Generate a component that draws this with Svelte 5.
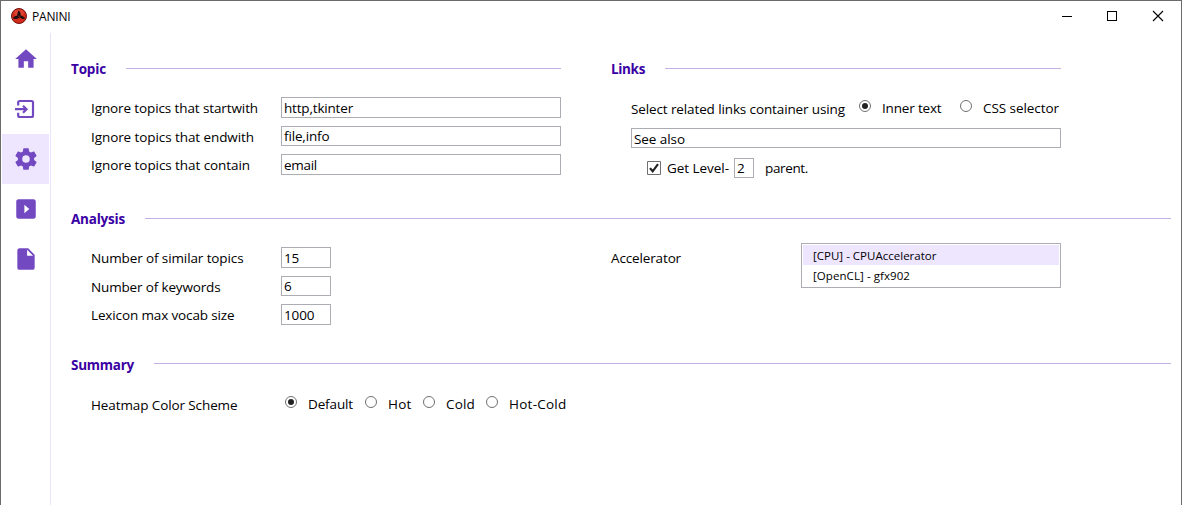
<script>
  function fit(node, width) {
    const natural = node.getBoundingClientRect().width;
    const n = node.textContent.length;
    node.style.letterSpacing = (width - natural) / n + 'px';
  }

  const nav = [
    { id: 'home', d: 'M10 20v-6h4v6h5v-8h3L12 3 2 12h3v8z' },
    { id: 'import' },
    { id: 'settings', d: 'M12 15.500A3.500 3.500 0 0 1 8.500 12 3.500 3.500 0 0 1 12 8.500a3.500 3.500 0 0 1 3.500 3.500 3.500 3.500 0 0 1-3.500 3.500m7.430-2.530c.04-.32.07-.64.07-.97 0-.33-.03-.66-.07-1l2.110-1.630c.19-.15.24-.42.12-.64l-2-3.460c-.12-.22-.39-.31-.61-.22l-2.490 1c-.52-.39-1.060-.73-1.690-.98l-.37-2.650A.506.506 0 0 0 14 2h-4c-.25 0-.46.18-.5.42l-.37 2.650c-.63.25-1.170.59-1.690.98l-2.490-1c-.22-.09-.49 0-.61.22l-2 3.460c-.13.22-.07.49.12.64L4.570 11c-.04.34-.07.67-.07 1 0 .33.03.65.07.97l-2.110 1.660c-.19.15-.25.42-.12.64l2 3.460c.12.22.39.3.61.22l2.490-1.010c.52.4 1.060.74 1.690.99l.37 2.650c.04.24.25.42.5.42h4c.25 0 .46-.18.5-.42l.37-2.650c.63-.26 1.170-.59 1.690-.99l2.490 1.010c.22.08.49 0 .61-.22l2-3.460c.12-.22.07-.49-.12-.64z' },
    { id: 'run', d: 'M19 3H5c-1.100 0-2 .9-2 2v14c0 1.100.9 2 2 2h14c1.100 0 2-.9 2-2V5c0-1.100-.9-2-2-2zM10.500 16V8l4.500 4z' },
    { id: 'file', d: 'M13 9V3.500L18.500 9M6 2c-1.110 0-2 .89-2 2v16a2 2 0 0 0 2 2h12a2 2 0 0 0 2-2V8l-6-6z' }
  ];
  const topics = [
    ['Ignore topics that startwith', 167, 'http,tkinter', 69],
    ['Ignore topics that endwith', 163, 'file,info', 45.500],
    ['Ignore topics that contain', 159, 'email', 33]
  ];
  const analysis = [
    ['Number of similar topics', 152.500, '15', 15],
    ['Number of keywords', 129.500, '6', 7.500],
    ['Lexicon max vocab size', 143.500, '1000', 30.500]
  ];
  const schemes = [['Default', 45, 80], ['Hot', 23.500, 58], ['Cold', 29, 63], ['Hot-Cold', 57.500, 90]];
</script>

{#snippet radio(label, width, on)}
  <i class="radio" class:on></i><span class="radio-label" use:fit={width}>{label}</span>
{/snippet}

{#snippet heading(label, width)}
  <h2><span use:fit={width}>{label}</span><i></i></h2>
{/snippet}

<div class="window">
  <header>
    <svg class="logo" width="16" height="16" viewBox="0 0 16 16">
      <circle cx="8" cy="8" r="7.500" fill="#d42a1c" stroke="#6b1712" />
      <ellipse cx="8" cy="5" rx="5" ry="3.500" fill="#e9584a" opacity=".5" />
      <path d="M7 2.500C9.300 3.100 9.900 5 9.600 7.200c2.200.7 4.100 2 4.400 3.700-1.800.5-4-.2-5.300-1.600C7 11 3.700 11.700 2 10.300c.3-1.500 2.200-2.400 4.200-2.800C6.100 5.500 7.300 4.500 7 2.500z" fill="#1d1110" />
      <circle cx="8" cy="8.300" r=".8" fill="#8e1b14" />
    </svg>
    <span class="title" use:fit={38.500}>PANINI</span>
    <svg class="controls" width="104" height="12" viewBox="0 0 104 12" fill="none" stroke="#000" shape-rendering="crispEdges">
      <path d="M1 6.500h10M46.500 1.500h9v9h-9z" />
      <path d="M92 1l10 10M102 1L92 11" stroke-width="1.100" shape-rendering="auto" />
    </svg>
  </header>

  <div class="body">
    <nav>
      {#each nav as item}
        <div class="nav-item" class:active={item.id === 'settings'}>
          {#if item.id === 'import'}
            <svg width="23" height="24" viewBox="0 0 23 24">
              <path class="line" d="M4.200 8.500V5.500Q4.200 4 5.700 4H17.500Q19 4 19 5.500V18.500Q19 20 17.500 20H5.700Q4.200 20 4.200 18.500V15.700" />
              <path class="line" d="M1 12.200H11.500M9 8.700L12.500 12.200 9 15.700" />
            </svg>
          {:else}
            <svg width="26" height="26" viewBox="0 0 24 24"><path d={item.d} /></svg>
          {/if}
        </div>
      {/each}
    </nav>

    <main>
      <div class="columns">
        <section class="topic">
          {@render heading('Topic', 35)}
          <div class="fields">
            {#each topics as [label, w, value, vw]}
              <div class="row">
                <label><span use:fit={w}>{label}</span></label>
                <div class="box wide"><span use:fit={vw}>{value}</span></div>
              </div>
            {/each}
          </div>
        </section>

        <section class="links">
          {@render heading('Links', 34)}
          <div class="link-options">
            <div class="using">
              <span class="lead" use:fit={214}>Select related links container using</span>
              <span class="inner">{@render radio('Inner text', 59.500, true)}</span>
              {@render radio('CSS selector', 76, false)}
            </div>
            <div class="box see"><span use:fit={51}>See also</span></div>
            <div class="parent">
              <svg width="14" height="14" viewBox="0 0 14 14"><path d="M.5.5h13v13H.5z" fill="#fff" stroke="#707070" /><path d="M3 7.100l2.700 3.200L11 3.200" fill="none" stroke="#212121" stroke-width="2.200" /></svg>
              <div class="get"><span use:fit={62}>Get Level-</span></div>
              <div class="box level"><span>2</span></div>
              <div class="after"><span use:fit={43}>parent.</span></div>
            </div>
          </div>
        </section>
      </div>

      <section class="analysis">
        {@render heading('Analysis', 54)}
        <div class="analysis-grid">
          <div class="fields">
            {#each analysis as [label, w, value, vw]}
              <div class="row">
                <label><span use:fit={w}>{label}</span></label>
                <div class="box small"><span use:fit={vw}>{value}</span></div>
              </div>
            {/each}
          </div>
          <div class="accelerator">
            <div class="acc-label"><span use:fit={70}>Accelerator</span></div>
            <div class="list">
              <div class="option selected"><span use:fit={123.500}>[CPU] - CPUAccelerator</span></div>
              <div class="option"><span use:fit={97}>[OpenCL] - gfx902</span></div>
            </div>
          </div>
        </div>
      </section>

      <section class="summary">
        {@render heading('Summary', 63)}
        <div class="schemes">
          <div class="scheme-label"><span use:fit={146.500}>Heatmap Color Scheme</span></div>
          {#each schemes as [label, w, span], i}
            <div class="scheme" style:width="{span}px">{@render radio(label, w, i === 0)}</div>
          {/each}
        </div>
      </section>
    </main>
  </div>
</div>

<style>
  :global(body) { margin: 0; overflow: hidden; }
  .window {
    box-sizing: border-box; width: 1182px; height: 505px;
    display: flex; flex-direction: column; background: #fff;
    border: 1px solid #6b6b6b; border-bottom: 0;
    font: 13.500px/20px "Open Sans", "Noto Sans", sans-serif; color: #000;
  }
  span { white-space: pre; }
  header { height: 32px; flex: none; display: flex; align-items: flex-start; box-sizing: border-box; padding: 7px 16px 0 10px; }
  .title { font-size: 12px; line-height: 18px; margin-left: 5px; flex: none; }
  .logo { flex: none; }
  .controls { margin: 2px 0 0 auto; }
  .body { flex: 1; display: flex; min-height: 0; }
  nav { width: 50px; flex: none; border-right: 1px solid #e9e3fc; padding-top: 1px; box-sizing: border-box; }
  .nav-item { width: 47px; height: 50px; margin-left: 1px; display: grid; place-items: center; }
  .nav-item.active { background: #eee5ff; }
  .nav-item path { fill: #7349c2; fill-rule: evenodd; }
  .nav-item .line { fill: none; stroke: #7349c2; stroke-width: 2.200; }
  main { flex: 1; padding: 26px 10px 0 20px; }
  section { flex: none; }
  h2 { margin: 0; height: 20px; display: flex; align-items: center; gap: 20px; font-size: 13.500px; font-weight: 700; color: #3a00a4; }
  h2 i { flex: 1; height: 1px; background: #c3b1e3; position: relative; top: -1px; }
  .columns { display: flex; gap: 50px; height: 150px; }
  .topic { width: 490px; }
  .links { width: 450px; }
  .fields { display: flex; flex-direction: column; gap: 8px; padding: 18px 0 0 20px; }
  .row { display: flex; height: 21px; align-items: center; }
  .row:nth-child(2) { height: 20px; }
  .row:nth-child(2) label { line-height: 22px; }
  label { width: 190px; height: 20px; }
  .box { box-sizing: border-box; height: 100%; border: 1px solid #abadb3; background: #fff; padding-left: 2px; line-height: 20px; }
  .row:nth-child(2) .box, .level { line-height: 19px; }
  .wide { width: 280px; }
  .small { width: 50px; }
  .link-options { padding: 18px 0 0 20px; }
  .using { height: 22px; display: flex; align-items: center; }
  .lead { position: relative; top: 1px; }
  .inner { display: flex; align-items: center; width: 101px; margin-left: 14px; }
  .radio { box-sizing: border-box; width: 12px; height: 12px; flex: none; border: 1px solid #707070; border-radius: 50%; position: relative; top: -2px; display: block; }
  .radio.on::after { content: ''; position: absolute; inset: 2px; border-radius: 50%; background: #212121; }
  .radio-label { margin-left: 11px; }
  .see { height: 20px; margin-top: 9px; }
  .parent { display: flex; align-items: center; height: 20px; margin: 10px 0 0 16px; }
  .get { margin-left: 6px; width: 67px; flex: none; line-height: 22px; }
  .level { width: 20px; margin-right: 11px; flex: none; }
  .after { line-height: 22px; }
  .analysis { height: 146px; }
  .analysis-grid { display: flex; }
  .analysis-grid .fields { width: 520px; }
  .accelerator { display: flex; padding-top: 14px; }
  .acc-label { width: 190px; padding-top: 5px; }
  .list { box-sizing: border-box; width: 260px; height: 45px; border: 1px solid #abadb3; padding: 1px; }
  .option { height: 20px; padding-left: 10px; font-size: 11.500px; line-height: 21px; }
  .selected { background: #eee5ff; }
  .summary h2 i { top: -2px; }
  .schemes { display: flex; height: 20px; padding: 20px 0 0 20px; }
  .scheme-label { width: 194px; }
  .scheme { display: flex; align-items: center; height: 18px; }
</style>
